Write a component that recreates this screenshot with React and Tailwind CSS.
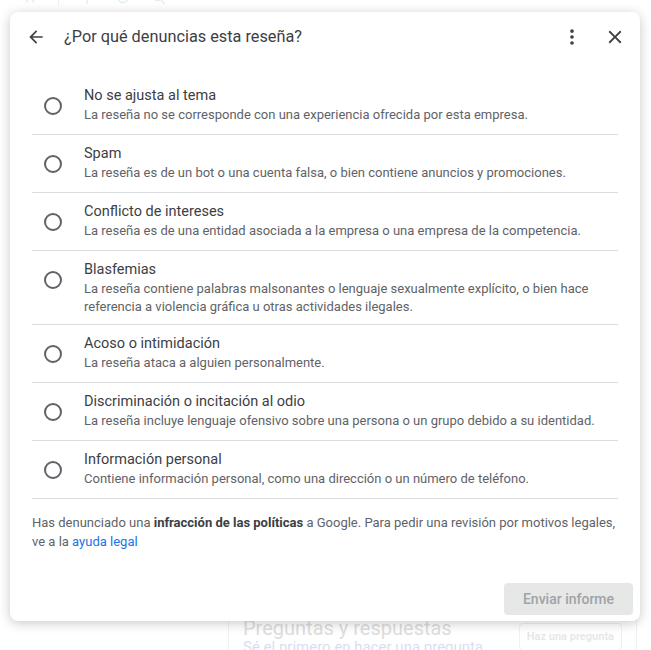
import React from "react";

const reasons = [
  {
    title: "No se ajusta al tema",
    desc: "La reseña no se corresponde con una experiencia ofrecida por esta empresa.",
  },
  {
    title: "Spam",
    desc: "La reseña es de un bot o una cuenta falsa, o bien contiene anuncios y promociones.",
  },
  {
    title: "Conflicto de intereses",
    desc: "La reseña es de una entidad asociada a la empresa o una empresa de la competencia.",
  },
  {
    title: "Blasfemias",
    desc: "La reseña contiene palabras malsonantes o lenguaje sexualmente explícito, o bien hace referencia a violencia gráfica u otras actividades ilegales.",
  },
  {
    title: "Acoso o intimidación",
    desc: "La reseña ataca a alguien personalmente.",
  },
  {
    title: "Discriminación o incitación al odio",
    desc: "La reseña incluye lenguaje ofensivo sobre una persona o un grupo debido a su identidad.",
  },
  {
    title: "Información personal",
    desc: "Contiene información personal, como una dirección o un número de teléfono.",
  },
];

// faded page behind the dialog
const Backdrop = () => {
  return (
    <div className="flex h-full flex-col opacity-[0.15]">
      <div className="flex h-[12px] items-end gap-[20px] pl-[22px] -mt-[6px]">
        <svg width="16" height="16" viewBox="0 0 24 24" fill="none" stroke="#5f6368" strokeWidth="2">
          <path d="M6 6l12 12M18 6L6 18" />
        </svg>
        <div className="h-[20px] w-px bg-[#9aa0a6]" />
        <svg width="16" height="16" viewBox="0 0 24 24" fill="none" stroke="#ea4335" strokeWidth="2">
          <circle cx="12" cy="9" r="5" />
          <path d="M12 14v7" />
        </svg>
        <svg width="16" height="16" viewBox="0 0 24 24" fill="none" stroke="#34a853" strokeWidth="2">
          <circle cx="12" cy="12" r="7" />
        </svg>
        <svg width="16" height="16" viewBox="0 0 24 24" fill="none" stroke="#4285f4" strokeWidth="2">
          <circle cx="10" cy="10" r="6" />
          <path d="M15 15l6 6" />
        </svg>
      </div>
      <div className="mt-auto ml-[228px] mr-[14px] flex h-[42px] items-start justify-between border-x border-t border-[#9aa0a6] pl-[14px] pr-[14px] pt-[8px]">
        <div>
          <div className="text-[20px] leading-[22px] text-[#202124]">Preguntas y respuestas</div>
          <div className="text-[15px] leading-[16px] text-[#1a0dab]">Sé el primero en hacer una pregunta</div>
        </div>
        <div className="mt-[6px] rounded border border-[#9aa0a6] px-[7px] py-[5px] text-[11px] leading-[16px] font-bold text-[#5f6368]">
          Haz una pregunta
        </div>
      </div>
    </div>
  );
};

const Radio = () => {
  return (
    <div className="flex h-10 w-[42px] shrink-0 items-center justify-center">
      <div className="h-[18px] w-[18px] rounded-full border-2 border-[#5f6368]" />
    </div>
  );
};

const ReasonRow = ({ title, desc }) => {
  return (
    <div className="flex items-start border-b border-[#dadce0] py-[8.5px]">
      <Radio />
      <div className="ml-[10px] flex-1">
        <div className="text-[14.5px] leading-[20px] text-[#3c4043]">{title}</div>
        <div className="text-[13px] leading-[18px] text-[#5f6368]">{desc}</div>
      </div>
    </div>
  );
};

export default function App() {
  return (
    <div className="relative h-[650px] w-[651px] overflow-hidden bg-white font-['Roboto',sans-serif]">
      <Backdrop />
      <div className="absolute left-[10px] top-[12px] flex h-[609px] w-[630px] flex-col rounded-lg bg-white shadow-[0_2px_12px_rgba(0,0,0,0.22)]">
        <div className="flex h-[50px] items-center pl-[6px] pr-[5px]">
          <button className="flex h-10 w-10 items-center justify-center text-[#3c4043]">
            <svg width="20" height="20" viewBox="0 0 24 24" fill="currentColor">
              <path d="M20 11H7.83l5.59-5.59L12 4l-8 8 8 8 1.41-1.41L7.83 13H20v-2z" />
            </svg>
          </button>
          <div className="ml-[8px] flex-1 text-[16.3px] text-[#3c4043]">¿Por qué denuncias esta reseña?</div>
          <button className="flex h-10 w-10 items-center justify-center text-[#3c4043]">
            <svg width="22" height="22" viewBox="0 0 24 24" fill="currentColor">
              <circle cx="12" cy="5.5" r="2" />
              <circle cx="12" cy="12" r="2" />
              <circle cx="12" cy="18.5" r="2" />
            </svg>
          </button>
          <button className="ml-[3px] flex h-10 w-10 items-center justify-center text-[#3c4043]">
            <svg width="22" height="22" viewBox="0 0 24 24" fill="currentColor">
              <path d="M19 6.41L17.59 5 12 10.59 6.41 5 5 6.41 10.59 12 5 17.59 6.41 19 12 13.41 17.59 19 19 17.59 13.41 12z" />
            </svg>
          </button>
        </div>

        <div className="mt-[15px] px-[22px]">
          {reasons.map((r) => (
            <ReasonRow key={r.title} title={r.title} desc={r.desc} />
          ))}
          <p className="mt-[14px] text-[13px] leading-[19px] text-[#5f6368]">
            Has denunciado una <span className="font-bold text-[#3c4043]">infracción de las políticas</span> a
            Google. Para pedir una revisión por motivos legales, ve a la{" "}
            <span className="text-[#1a73e8]">ayuda legal</span>
          </p>
        </div>

        <div className="mt-auto mb-[6px] mr-[7px] self-end">
          <button className="h-[32px] w-[129px] rounded bg-[#e6e7e7] text-[14px] font-medium text-[#a0a3a6]">
            Enviar informe
          </button>
        </div>
      </div>
    </div>
  );
}
